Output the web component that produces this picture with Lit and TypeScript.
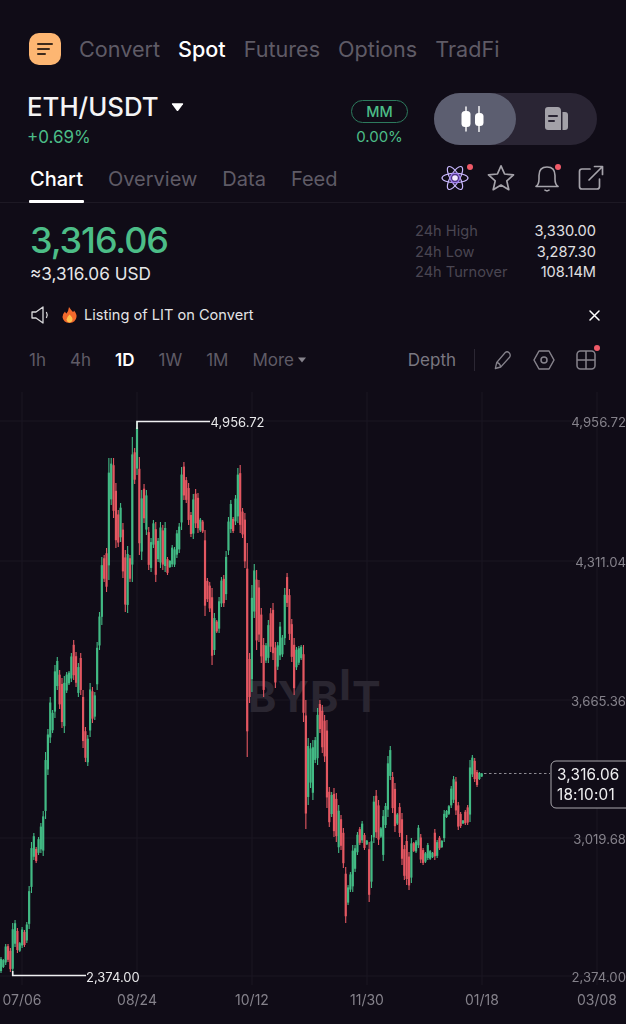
import { LitElement, html, svg, css } from "lit";
import { customElement } from "lit/decorators.js";

const DATA = `g957-973 g959-968 g944-965 r944-962 r948-972 g923-975 g920-947 r928-953 g942-952 g927-948 r930-947 g922-943 g886-929 g842-893 g833-860 r847-863 g837-855 g823-853 g811-856 g752-819 g729-775 g697-743 g710-733 g665-718 g657-690 r670-709 r678-728 g676-733 g672-693 g671-685 g653-682 r640-680 r652-687 g663-697 r653-695 r690-748 r727-762 g735-766 g683-737 r687-723 g692-720 g642-690
g612-650 g557-625 r555-582 r548-592 g458-580 g458-505 r458-518 r483-548 r510-547 g503-542 r523-578 r550-612 g546-613 r555-582 g437-582 r448-484 g421-475 r457-555 g490-560 r484-523 g490-535 r527-570 g538-572 g520-548 r522-582 g538-562 g522-568 r525-570 g522-572 r557-575 g560-568 g545-567 g547-567 g530-558 g523-553 g467-530 r462-500 r477-503 r483-525 r512-537 g494-539 r489-528 r493-533 g518-532 r520-533 r530-616 r578-602 r582-612 r588-665 g613-655 r620-633 g597-633 g577-607 r575-607 g551-600 g517-555 g500-533 r517-533 g495-525 g468-523 r465-533 r508-538 r513-568
r543-757 r653-703 g585-692 g564-618 r570-650 r580-642 r608-663 r638-697 g643-663 g620-663 r608-652 r603-660 r642-688 g642-670 g622-660 g635-657 g588-645 r573-607 r589-640 r619-662 r638-695 g647-670 g646-665 g645-660 r645-722 r700-829 g738-805 g743-788 g740-800 g737-763 g708-765 r700-733 r705-753 r715-762 r720-808 r787-827 g792-817 r788-837 r793-842 g805-853 r815-850 r828-868
r867-923 g885-905 g872-892 g845-892 g845-872 g832-855 r827-845 g821-843 r833-850 g840-845 r842-902 g835-888 g796-843 r790-838 r800-845 g827-838 g810-861 g803-828 g756-817 g746-780 r772-813 r783-832 g813-825 r803-837 r813-865 r845-880 r835-885 r852-890 g838-883 r842-852 g840-853 g825-848 r834-863 r848-865 g852-863 g843-860 g850-860 g852-858 r829-860 g840-858 r836-850 g840-848 g810-842 g810-818 g805-815 g786-808 g776-803 r777-815 r802-830 r812-828 g820-824 r810-825 r805-825 g760-822 g755-777 r758-782 r770-787 g772-780 g773-777`;

const candles = DATA.trim().split(/\s+/).map((t, i) => {
  const m = /^([gr])(\d+)-(\d+)$/.exec(t)!;
  const hi = +m[2], lo = +m[3];
  const inset = (lo - hi) * 0.12;
  return { x: 1 + i * 2.345, hi, lo, top: hi + inset, bot: lo - inset, up: m[1] === "g" };
});

const GRID_Y = [421, 561, 700, 838, 976];
const GRID_X = [22, 137, 252, 367, 482, 597];
const PRICES = ["4,956.72", "4,311.04", "3,665.36", "3,019.68", "2,374.00"];
const DATES = ["07/06", "08/24", "10/12", "11/30", "01/18", "03/08"];
const NAV = ["Convert", "Spot", "Futures", "Options", "TradFi"];
const TABS = ["Chart", "Overview", "Data", "Feed"];
const STATS = [["24h High", "3,330.00"], ["24h Low", "3,287.30"], ["24h Turnover", "108.14M"]];
const INTERVALS = ["1h", "4h", "1D", "1W", "1M"];

@customElement("app-root")
export class AppRoot extends LitElement {
  static styles = css`
    :host { display: block; width: 626px; height: 1024px; overflow: hidden; background: #100c17; color: #fff;
      font-family: Inter, "Noto Sans", sans-serif; }
    svg { display: block; flex: none; }
    .nav { display: flex; align-items: center; gap: 18px; padding: 33px 0 0 29px; height: 32px; font-size: 21.6px; color: #5f5b66; }
    .logo { width: 32px; height: 32px; border-radius: 10px; background: #fdb672; display: flex; align-items: center; justify-content: center; }
    .nav .on { color: #fff; font-weight: 500; }
    .pair-row { display: flex; align-items: flex-start; margin-top: 28px; padding-left: 27px; height: 52px; }
    .pair { width: 324px; }
    .pair-name { display: flex; align-items: center; gap: 12px; font-size: 25.8px; font-weight: 500; line-height: 30px; margin-top: -1px; color: #f4f4f5; }
    .chg { font-size: 17px; line-height: 20px; color: #4cbd87; margin-top: 5px; }
    .mm { width: 57px; margin-top: 7px; margin-right: 26px; display: flex; flex-direction: column; align-items: center; color: #4cbd87; }
    .mm-b { width: 55px; height: 21px; border: 1px solid #2d7a5d; border-radius: 12px; font-size: 14.5px; font-weight: 500; line-height: 21px; text-align: center; }
    .mm-v { font-size: 15px; line-height: 20px; margin-top: 4px; white-space: nowrap; }
    .toggle { width: 163px; height: 52px; border-radius: 26px; background: #2a2534; display: flex; }
    .toggle div { display: flex; align-items: center; justify-content: center; width: 82px; height: 52px; border-radius: 26px; }
    .toggle .act { background: #5c5e70; }
    .tabs { display: flex; align-items: center; height: 41px; margin-top: 16px; padding: 0 22px 0 30px; border-bottom: 1px solid #1d1924; font-size: 20px; color: #5f5b66; }
    .tab-list { display: flex; gap: 25px; flex: 1; align-self: stretch; }
    .tab { position: relative; line-height: 36px; }
    .tab.on { color: #fff; font-weight: 500; }
    .tab.on::after { content: ""; position: absolute; left: -1px; right: -1px; bottom: -1px; height: 3px; background: #fff; border-radius: 1px; }
    .tools { display: flex; align-items: center; gap: 18px; margin-top: -7px; }
    .tools .bell { margin: 0 1px 0 2px; }
    .dotwrap { position: relative; display: flex; }
    .dot { position: absolute; width: 6px; height: 6px; border-radius: 50%; background: #ef5a68; }
    .quote { display: flex; justify-content: space-between; padding: 15px 30px 0 30px; height: 84px; }
    .price { font-size: 36px; font-weight: 500; line-height: 44px; color: #4cbd87; letter-spacing: -1.1px; }
    .usd { font-size: 17.2px; line-height: 20px; margin-top: 2px; color: #e6e6e8; }
    .stats { display: grid; grid-template-columns: 115px 66px; margin-top: 3px; width: 181px; align-content: start; font-size: 14.6px; line-height: 20.5px; }
    .stats .l { color: #4a4652; white-space: nowrap; }
    .stats .v { color: #e0e0e3; text-align: right; white-space: nowrap; }
    .notice { display: flex; align-items: center; height: 20px; padding: 3px 26px 0 31px; font-size: 14.6px; color: #e4e4e6; gap: 8px; }
    .notice .txt { flex: 1; margin-left: -1px; }
    .intervals { display: flex; align-items: center; height: 26px; margin-top: 22px; padding: 0 29px; font-size: 17px; color: #5f5b66; }
    .iv-list { display: flex; gap: 24px; flex: 1; align-items: center; }
    .iv-list .on { color: #fff; font-weight: 600; }
    .more { display: flex; align-items: center; gap: 4px; }
    .depth { color: #7a7781; }
    .sep { width: 1px; height: 22px; background: #2b2733; margin: 0 19px 0 18px; }
    .iv-tools { display: flex; align-items: center; gap: 21px; margin-right: 1px; }
    .chart { margin-top: 19px; }
    .candles { filter: blur(.2px); }
    .grid { stroke: #1b1722; stroke-width: 1; }
    .axis { font-size: 13.2px; fill: #85828b; font-family: Inter, sans-serif; }
    .date { font-size: 14px; fill: #85828b; font-family: Inter, sans-serif; text-anchor: middle; }
    .mark { font-size: 13px; fill: #e8e8ea; font-family: Inter, sans-serif; }
    .tag { font-size: 15.3px; fill: #eeeef0; font-family: Inter, sans-serif; letter-spacing: .2px; }
    .wm { font-size: 43px; font-weight: 700; fill: #2a2631; font-family: Inter, sans-serif; }
    .wm.spaced { letter-spacing: 1px; }
  `;

  private candlesSvg() {
    return candles.map(c => {
      const col = c.up ? "#46c48b" : "#f05c66";
      return svg`<g stroke=${col} opacity=".95">
        <line x1=${c.x} x2=${c.x} y1=${c.hi} y2=${c.lo} stroke-width="1.1"></line>
        <line x1=${c.x} x2=${c.x} y1=${c.top} y2=${c.bot} stroke-width="2.2"></line></g>`;
    });
  }

  private chart() {
    return html`<svg class="chart" width="626" height="632" viewBox="0 392 626 632">
      ${GRID_Y.map(y => svg`<line class="grid" x1="0" x2="626" y1=${y} y2=${y}></line>`)}
      ${GRID_X.map(x => svg`<line class="grid" x1=${x} x2=${x} y1="392" y2="985"></line>`)}
      <text class="wm spaced" x="248" y="712">BYB</text>
      <text class="wm" x="339" y="700">I</text>
      <text class="wm" x="352" y="712">T</text>
      <g class="candles">${this.candlesSvg()}</g>
      <path d="M137 429V421.5H210" fill="none" stroke="#f0f0f2" stroke-width="1.6"></path>
      <text class="mark" x="210.5" y="427">4,956.72</text>
      <path d="M12.7 971V975.5H86" fill="none" stroke="#f0f0f2" stroke-width="1.6"></path>
      <text class="mark" x="86" y="981.5">2,374.00</text>
      ${PRICES.map((p, i) => svg`<text class="axis" x="626" text-anchor="end" y=${GRID_Y[i] + 5.5}>${p}</text>`)}
      ${DATES.map((d, i) => svg`<text class="date" x=${GRID_X[i]} y="1005">${d}</text>`)}
      <line x1="484" x2="550" y1="773.5" y2="773.5" stroke="#8d8a92" stroke-dasharray="2.5 2.5"></line>
      <rect x="551" y="761" width="85" height="47" rx="5" fill="#100c17" stroke="#a9a7ad"></rect>
      <text class="tag" x="557" y="780">3,316.06</text>
      <text class="tag" x="557" y="800">18:10:01</text>
    </svg>`;
  }

  render() {
    return html`
      <div class="nav">
        <div class="logo"><svg width="18" height="16" viewBox="0 0 18 16" fill="none" stroke="#3d2a1c" stroke-width="2" stroke-linecap="round"><path d="M2 3H16M2 8H13M2 13H9"></path></svg></div>
        ${NAV.map(n => html`<span class=${n === "Spot" ? "on" : ""}>${n}</span>`)}
      </div>

      <div class="pair-row">
        <div class="pair">
          <div class="pair-name">ETH/USDT
            <svg width="13" height="10" viewBox="0 0 13 10"><path d="M1.5 1.2H11.5Q12.6 1.2 12 2.3L7.4 8.6Q6.5 9.6 5.6 8.6L1 2.3Q.4 1.2 1.5 1.2Z" fill="#fff"></path></svg>
          </div>
          <div class="chg">+0.69%</div>
        </div>
        <div class="mm"><div class="mm-b">MM</div><div class="mm-v">0.00%</div></div>
        <div class="toggle">
          <div class="act"><svg width="24" height="26" viewBox="0 0 24 26" fill="#fff" stroke="#fff" stroke-width="1.4" stroke-linecap="round" style="margin-left:-4px"><path d="M5 1V25M18 0.5V25.5"></path><rect x=".5" y="5" width="9" height="16" rx="3.500" stroke="none"></rect><rect x="14" y="7" width="8.500" height="13" rx="3.500" stroke="none"></rect></svg></div>
          <div><svg width="23" height="24" viewBox="0 0 23 24"><path d="M3 0H12.500Q16 0 16 4V23H3Q0 23 0 20V3Q0 0 3 0Z" fill="#a3a1a8"></path><path d="M17.500 5H20Q23 5 23 8V20Q23 23 20 23H17.500Z" fill="#a3a1a8"></path><path d="M4 9H12M4 14H9" stroke="#2a2534" stroke-width="2" stroke-linecap="round"></path></svg></div>
        </div>
      </div>

      <div class="tabs">
        <div class="tab-list">${TABS.map((t, i) => html`<span class="tab ${i === 0 ? "on" : ""}">${t}</span>`)}</div>
        <div class="tools">
          <div class="dotwrap">
            <svg width="28" height="28" viewBox="-14 -14 28 28" fill="none" stroke-width="1.2">
              <g stroke="#c9b8ff"><ellipse rx="13" ry="4.6"></ellipse><ellipse rx="13" ry="4.6" transform="rotate(60)"></ellipse><ellipse rx="13" ry="4.6" transform="rotate(-60)"></ellipse></g>
              <circle r="5.5" fill="#7d4fe0" opacity=".55"></circle><circle r="2.8" fill="#f3e9ff"></circle>
            </svg>
            <span class="dot" style="right:-4px;top:0"></span>
          </div>
          <svg width="28" height="28" viewBox="0 0 28 28" fill="none" stroke="#a5a3aa" stroke-width="1.7" stroke-linejoin="round"><path d="M14 1.800L17.600 10 26.500 10.900 19.800 16.900 21.800 25.700 14 21.100 6.200 25.700 8.200 16.900 1.500 10.900 10.400 10Z"></path></svg>
          <div class="dotwrap bell">
            <svg width="24" height="28" viewBox="0 0 24 28" fill="none" stroke="#a5a3aa" stroke-width="1.6" stroke-linecap="round" stroke-linejoin="round"><path d="M1 22.500Q4 20.500 4 15V11.500Q4 3 12 3Q20 3 20 11.500V15Q20 20.500 23 22.500ZM10 26.200Q12 27.500 14 26.200"></path></svg>
            <span class="dot" style="right:-2px;top:0"></span>
          </div>
          <svg width="26" height="26" viewBox="0 0 26 26" fill="none" stroke="#a5a3aa" stroke-width="1.7" stroke-linecap="round" stroke-linejoin="round"><path d="M12 4H4Q1.500 4 1.500 6.500V21.500Q1.500 24 4 24H19Q21.500 24 21.500 21.500V14M11 15L24 2M16.500 1.500H24.500V9.500"></path></svg>
        </div>
      </div>

      <div class="quote">
        <div><div class="price">3,316.06</div><div class="usd">≈3,316.06 USD</div></div>
        <div class="stats">${STATS.map(([l, v]) => html`<span class="l">${l}</span><span class="v">${v}</span>`)}</div>
      </div>

      <div class="notice">
        <svg width="23" height="18" viewBox="0 0 23 18" fill="none" stroke="#d8d8da" stroke-width="1.3" stroke-linejoin="round" stroke-linecap="round"><path d="M1 6H5L12 1V17L5 12H1ZM15.500 6.500Q17 9 15.500 11.500"></path></svg>
        <svg width="15" height="16" viewBox="0 0 15 16"><path d="M7 0Q9 3 11 5Q11.800 4.500 12 3.500Q15 7 14.500 10Q13.800 15.500 7.500 16Q1 15.500 .5 10Q.5 7 3 4.500Q3.500 6 4.500 6.500Q6.500 4 7 0Z" fill="#f2692c"></path><path d="M7.500 7.500Q10.800 10.500 10.500 12.500Q10 15.500 7.500 15.500Q5 15.500 4.500 12.800Q4.500 10.500 7.500 7.500Z" fill="#fcc24e"></path></svg>
        <span class="txt">Listing of LIT on Convert</span>
        <svg width="11" height="11" viewBox="0 0 11 11" stroke="#fff" stroke-width="1.5" stroke-linecap="round"><path d="M1 1L10 10M10 1L1 10"></path></svg>
      </div>

      <div class="intervals">
        <div class="iv-list">
          ${INTERVALS.map(v => html`<span class=${v === "1D" ? "on" : ""}>${v}</span>`)}
          <span class="more">More <svg width="8" height="6" viewBox="0 0 8 6"><path d="M0 .5H8L4 5.500Z" fill="#86838c"></path></svg></span>
        </div>
        <span class="depth">Depth</span>
        <span class="sep"></span>
        <div class="iv-tools">
          <svg width="18" height="20" viewBox="0 0 20 20" preserveAspectRatio="none" fill="none" stroke="#86838c" stroke-width="1.4" stroke-linejoin="round" stroke-linecap="round"><path d="M1.500 18.500L3 12.500 12.500 2.500Q14.500 .8 16.800 2.700Q19 5 17.300 7.200L7.500 17Z M3 12.500Q6.500 13 7.500 17"></path></svg>
          <svg width="22" height="20" viewBox="0 0 22 20" fill="none" stroke="#86838c" stroke-width="1.5" stroke-linejoin="round"><path d="M6 1H16L21 10 16 19H6L1 10Z"></path><circle cx="11" cy="10" r="3"></circle></svg>
          <div class="dotwrap">
            <svg width="20" height="20" viewBox="0 0 20 20" fill="none" stroke="#86838c" stroke-width="1.5"><rect x="1" y="1" width="18" height="18" rx="3.500"></rect><path d="M1 10H19M10 1V19"></path></svg>
            <span class="dot" style="right:-4px;top:-5px"></span>
          </div>
        </div>
      </div>
      ${this.chart()}
    `;
  }
}
